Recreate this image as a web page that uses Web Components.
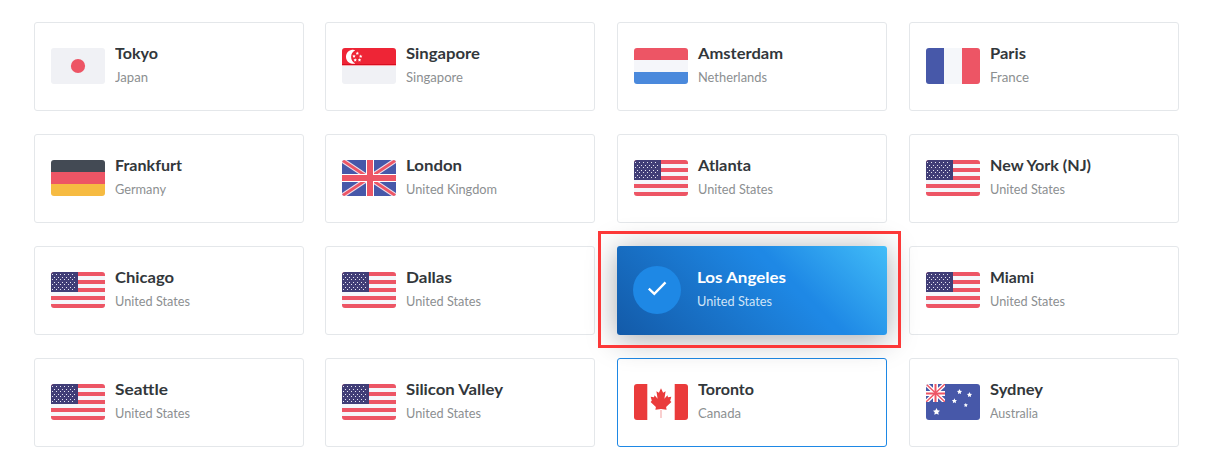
<!DOCTYPE html>
<html lang="en">
<head>
<meta charset="utf-8">
<title>Locations</title>
<style>
body{margin:0;background:#fff;width:1209px;height:466px;overflow:hidden;font-family:Lato,"Open Sans",sans-serif}
</style>
</head>
<body>
<location-grid></location-grid>
<script>
const stripe = (c, y, h) => `<path fill="${c}" d="M0 ${y}h54v${h}H0z"/>`;
const star = (x, y, r, c = '#fff') => {
  let p = [];
  for (let i = 0; i < 10; i++) {
    const a = -Math.PI / 2 + i * Math.PI / 5, q = i % 2 ? r * .5 : r;
    p.push((x + q * Math.cos(a)).toFixed(2) + ',' + (y + q * Math.sin(a)).toFixed(2));
  }
  return `<polygon fill="${c}" points="${p.join(' ')}"/>`;
};
const usa = () => {
  let s = stripe('#f5f6fa', 0, 36);
  for (let i = 0; i < 5; i++) s += stripe('#ed5565', i * 8, 4);
  s += '<path fill="#413e77" d="M0 0h27v20H0z"/>';
  for (let r = 0; r < 7; r++)
    for (let c = 0; c < 6; c++)
      s += `<rect x="${1 + c * 4 + (r % 2 ? 2 : 0)}" y="${[2, 5, 7, 10, 12, 15, 17][r]}" width="1" height="1" fill="#e6e6f2"/>`;
  return s;
};
const FLAGS = {
  jp: stripe('#f0f1f5', 0, 36) + '<circle cx="27" cy="18" r="7.1" fill="#ed5565"/>',
  sg: stripe('#f0f1f5', 0, 36) + stripe('#ee2536', 0, 17) + stripe('#d80d20', 16, 1) + stripe('#f8a9ae', 17, 1) +
    '<path fill="#fff" d="M13.3 2.2A7 7 0 1 0 13.3 15.4 7.3 7.3 0 0 1 13.3 2.2z"/>' +
    star(15.3, 5.4, 1.8) + star(12, 8.2, 1.8) + star(18.7, 8.4, 1.8) + star(13.2, 12, 1.8) + star(17.5, 12, 1.8),
  nl: stripe('#ed5565', 0, 12) + stripe('#f5f6fa', 12, 12) + stripe('#4a89dc', 24, 12),
  fr: stripe('#f5f7fa', 0, 36) + '<path fill="#4758a9" d="M0 0h18v36H0z"/><path fill="#ed5565" d="M36 0h18v36H36z"/>',
  de: stripe('#434a54', 0, 12) + stripe('#ed5565', 12, 12) + stripe('#f6bb42', 24, 12),
  gb: stripe('#4758a9', 0, 36) +
    '<path d="M0 0l54 36M54 0L0 36" stroke="#f0dfea" stroke-width="5"/><path d="M0 0l54 36M54 0L0 36" stroke="#ed5565" stroke-width="2.8"/>' +
    '<path d="M28 0v36M0 18h54" stroke="#fff" stroke-width="8"/><path d="M28 0v36M0 18h54" stroke="#ed5565" stroke-width="6"/>',
  us: usa(),
  ca: stripe('#fff', 0, 36) + '<path fill="#ea3b3b" d="M0 0h13.3v36H0zM40.7 0H54v36H40.7z"/>' +
    '<path fill="#ea3b3b" transform="translate(0 -.7) scale(1 1.15)" d="M27 4.3l-2.1 3.9-2.5-1.2 1.2 6.4-3-3.1-.6 1.9-3.3-.6 1.1 3.5-1.2 1.1 5.3 4.5-.5 2.3 5.6-.7 5.6.7-.5-2.3 5.3-4.5-1.2-1.1 1.1-3.5-3.3.6-.6-1.9-3 3.1 1.2-6.4-2.5 1.2z"/>' +
    '<path fill="#f4a0a0" d="M26.5 26h1v8h-1z"/>',
  au: stripe('#4758a9', 0, 36) +
    '<path d="M0 0l19 18M19 0L0 18" stroke="#fff" stroke-width="4"/><path d="M9.5 0v18M0 9.5h19" stroke="#fff" stroke-width="5"/>' +
    '<path d="M0 0l19 18M19 0L0 18" stroke="#ed5565" stroke-width="1.4"/><path d="M9.5 0v18M0 9.5h19" stroke="#ed5565" stroke-width="2"/>' +
    '<path fill="#4758a9" d="M19 0h8v22H0v-4h19z"/>' +
    star(10.5, 27.8, 3.7) + star(33.5, 7.8, 2.7) + star(43.5, 10.8, 2.7) + star(28.4, 17, 2.7) + star(39.8, 21.2, 2.2)
};

class CountryFlag extends HTMLElement {
  connectedCallback() {
    this.attachShadow({ mode: 'open' }).innerHTML =
      `<style>:host{display:block;width:54px;height:36px;border-radius:3px;overflow:hidden;flex:none}svg{display:block}</style>
       <svg width="54" height="36" viewBox="0 0 54 36" fill="none">${FLAGS[this.getAttribute('code')]}</svg>`;
  }
}
customElements.define('country-flag', CountryFlag);

class CheckBadge extends HTMLElement {
  connectedCallback() {
    this.attachShadow({ mode: 'open' }).innerHTML =
      `<style>:host{display:block;width:48px;height:48px;border-radius:50%;background:#1e88e5;flex:none}svg{display:block}</style>
       <svg width="48" height="48" fill="none"><path d="M15.8 22.6l5.5 5.3L32.5 16.4" stroke="#fff" stroke-width="2.3"/></svg>`;
  }
}
customElements.define('check-badge', CheckBadge);

/* One line of text, widened so that it fills its nominal width. */
class FitText extends HTMLElement {
  connectedCallback() {
    this.attachShadow({ mode: 'open' }).innerHTML =
      '<style>:host{display:block;white-space:nowrap}span{display:inline-block;transform-origin:0 50%}</style><span><slot></slot></span>';
    const span = this.shadowRoot.querySelector('span');
    const k = this.getAttribute('width') / span.getBoundingClientRect().width;
    span.style.transform = `scaleX(${k.toFixed(4)})`;
  }
}
customElements.define('fit-text', FitText);

class LocationCard extends HTMLElement {
  connectedCallback() {
    const [city, cw, country, nw, code] = this.data;
    const active = this.hasAttribute('active');
    this.attachShadow({ mode: 'open' }).innerHTML = `<style>
      :host{display:flex;box-sizing:border-box;width:270px;height:89px;padding:25px 16px 0;border:1px solid #e4e7ea;border-radius:3px;gap:9.5px;align-items:flex-start}
      :host([hovered]){border-color:#1e88e5}
      :host([active]){position:relative;border:0;padding:20px 16px 0;gap:16px;
        background:linear-gradient(45deg,#135aa8 0%,#1e88e5 62%,#1e88e5 64%,#42bdf8 100%);
        box-shadow:0 4px 30px rgba(20,30,40,.38)}
      .t{margin-top:-5px}
      :host([active]) .t{margin-top:1px}
      .city{font-size:15px;line-height:20px;font-weight:700;color:#32373b}
      .land{font-size:13px;line-height:18px;margin-top:5px;color:#8c8f91}
      :host([active]) .city{color:#fff}
      :host([active]) .land{color:#d0e4f7}
      .mark{position:absolute;left:-19px;top:-15px;width:297px;height:111px;border:3px solid #fc3838}
      </style>
      ${active ? '<check-badge></check-badge>' : `<country-flag code="${code}"></country-flag>`}
      <div class="t"><fit-text class="city" width="${cw}">${city}</fit-text><fit-text class="land" width="${nw}">${country}</fit-text></div>
      ${active ? '<div class="mark"></div>' : ''}`;
  }
}
customElements.define('location-card', LocationCard);

const US = ['United States', 75, 'us'];
const PLACES = [
  ['Tokyo', 43, 'Japan', 33, 'jp'], ['Singapore', 74, 'Singapore', 57, 'sg'],
  ['Amsterdam', 85, 'Netherlands', 69, 'nl'], ['Paris', 36, 'France', 39, 'fr'],
  ['Frankfurt', 67, 'Germany', 51, 'de'], ['London', 56, 'United Kingdom', 91, 'gb'],
  ['Atlanta', 53, ...US], ['New York (NJ)', 101, ...US],
  ['Chicago', 59, ...US], ['Dallas', 46, ...US], ['Los Angeles', 89, ...US], ['Miami', 44, ...US],
  ['Seattle', 53, ...US], ['Silicon Valley', 97, ...US],
  ['Toronto', 56, 'Canada', 43, 'ca'], ['Sydney', 53, 'Australia', 48, 'au']
];
class LocationGrid extends HTMLElement {
  connectedCallback() {
    const root = this.attachShadow({ mode: 'open' });
    root.innerHTML = `<style>:host{display:grid;grid-template-columns:291px 292px 292px 270px;row-gap:23px;padding:22px 30px 19px 34px}</style>`;
    PLACES.forEach(p => {
      const card = document.createElement('location-card');
      card.data = p;
      card.toggleAttribute('active', p[0] === 'Los Angeles');
      card.toggleAttribute('hovered', p[0] === 'Toronto');
      root.append(card);
    });
  }
}
customElements.define('location-grid', LocationGrid);
</script>
</body>
</html>
